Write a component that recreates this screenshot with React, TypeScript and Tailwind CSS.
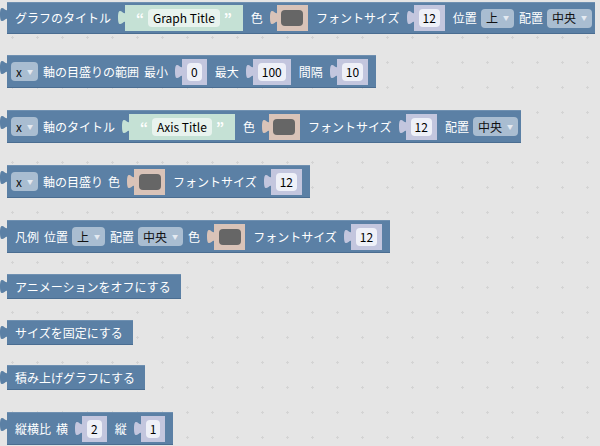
import React from "react";

const BLUE = "#5b80a5";
const STR = "#c5e1d5";
const NUM = "#c3c6de";
const COL = "#d9c3b8";

function Tab({ color }: { color: string }) {
  return (
    <svg
      className="absolute left-[-7px] top-[5px] overflow-visible"
      width="8"
      height="15"
      viewBox="0 0 8 15"
    >
      <path d="M8,0 C8,10 0,-8 0,7.5 C0,23 8,5 8,15 Z" fill={color} />
    </svg>
  );
}

function Block({
  children,
  className = "",
}: {
  children: React.ReactNode;
  className?: string;
}) {
  return (
    <div
      className={
        "relative flex items-center self-start ml-[7px] bg-[#5b80a5] text-white text-[12px] leading-none shadow-[inset_0_-1px_0_#4a6d91,inset_0_1px_0_#6f90b1] " +
        className
      }
    >
      <Tab color={BLUE} />
      {children}
    </div>
  );
}

function L({ t, first = false }: { t: string; first?: boolean }) {
  return (
    <span className={(first ? "" : "ml-[5px] ") + "whitespace-nowrap"}>{t}</span>
  );
}

function DD({ t, first = false }: { t: string; first?: boolean }) {
  return (
    <span
      className={
        (first ? "" : "ml-[4px] ") +
        "flex h-[19px] items-center rounded-[4px] bg-[#a9bdd1] px-[5px] text-[#111] whitespace-nowrap"
      }
    >
      {t}
      <span className="ml-[5px] text-[6px] text-[#e4eaf1]">▼</span>
    </span>
  );
}

function Num({ v, last = false }: { v: string; last?: boolean }) {
  return (
    <div
      className={
        "relative ml-[14px] flex h-[26px] items-center bg-[#c3c6de] px-[5px] " +
        (last ? "mr-[8px]" : "mr-[3px]")
      }
    >
      <Tab color={NUM} />
      <span className="flex h-[18px] items-center rounded-[4px] bg-[#eef0f8] px-[4px] text-[#000]">
        {v}
      </span>
    </div>
  );
}

function Str({ v }: { v: string }) {
  return (
    <div className="relative ml-[14px] mr-[3px] flex h-[26px] items-center bg-[#c5e1d5] px-[9px]">
      <Tab color={STR} />
      <span className="w-[12px] text-center text-[14px] font-bold text-white">“</span>
      <span className="mx-[2px] flex h-[18px] items-center rounded-[4px] bg-[#e8f3ee] px-[5px] text-[#000] whitespace-nowrap">
        {v}
      </span>
      <span className="w-[12px] text-center text-[14px] font-bold text-white">”</span>
    </div>
  );
}

function Col() {
  return (
    <div className="relative ml-[14px] mr-[3px] flex h-[26px] w-[31px] items-center justify-center bg-[#d9c3b8]">
      <Tab color={COL} />
      <span className="h-[16px] w-[22px] rounded-[4px] bg-[#666666]" />
    </div>
  );
}

export default function App() {
  return (
    <div className="min-h-screen w-full overflow-hidden bg-[#e5e5e5] bg-[radial-gradient(circle,#d4d4d4_1px,transparent_1.2px)] bg-[length:25px_25px] font-['Noto_Sans_CJK_JP','Noto_Sans',sans-serif]">
      <div className="flex flex-col">
        <Block className="mt-[2px] h-[32px] pl-[8px] pr-[3px]">
          <L t="グラフのタイトル" first />
          <Str v="Graph Title" />
          <L t="色" />
          <Col />
          <L t="フォントサイズ" />
          <Num v="12" />
          <L t="位置" />
          <DD t="上" />
          <L t="配置" />
          <DD t="中央" />
        </Block>

        <Block className="mt-[21px] h-[33px] pl-[4px]">
          <DD t="x" first />
          <L t="軸の目盛りの範囲" />
          <L t="最小" />
          <Num v="0" />
          <L t="最大" />
          <Num v="100" />
          <L t="間隔" />
          <Num v="10" last />
        </Block>

        <Block className="mt-[22px] h-[33px] pl-[4px] pr-[3px]">
          <DD t="x" first />
          <L t="軸のタイトル" />
          <Str v="Axis Title" />
          <L t="色" />
          <Col />
          <L t="フォントサイズ" />
          <Num v="12" />
          <L t="配置" />
          <DD t="中央" />
        </Block>

        <Block className="mt-[22px] h-[33px] pl-[4px]">
          <DD t="x" first />
          <L t="軸の目盛り" />
          <L t="色" />
          <Col />
          <L t="フォントサイズ" />
          <Num v="12" last />
        </Block>

        <Block className="mt-[22px] h-[33px] pl-[8px]">
          <L t="凡例" first />
          <L t="位置" />
          <DD t="上" />
          <L t="配置" />
          <DD t="中央" />
          <L t="色" />
          <Col />
          <L t="フォントサイズ" />
          <Num v="12" last />
        </Block>

        <Block className="mt-[21px] h-[25px] pl-[8px] pr-[10px]">
          <L t="アニメーションをオフにする" first />
        </Block>

        <Block className="mt-[21px] h-[25px] pl-[8px] pr-[10px]">
          <L t="サイズを固定にする" first />
        </Block>

        <Block className="mt-[20px] h-[25px] pl-[8px] pr-[10px]">
          <L t="積み上げグラフにする" first />
        </Block>

        <Block className="mt-[22px] h-[33px] pl-[8px]">
          <L t="縦横比" first />
          <L t="横" />
          <Num v="2" />
          <L t="縦" />
          <Num v="1" last />
        </Block>
      </div>
    </div>
  );
}
